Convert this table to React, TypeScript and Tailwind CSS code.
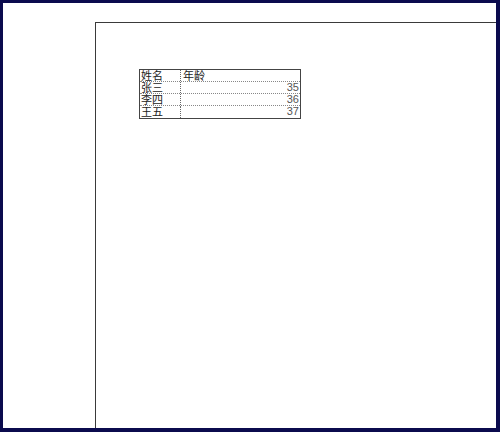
const rows = [
  { name: '张三', age: '35' },
  { name: '李四', age: '36' },
  { name: '王五', age: '37' },
];

export default function App() {
  return (
    <div className="w-[500px] h-[432px] bg-[#0b0b4e] pt-[3px] pl-[3px] pr-[4px] pb-[4px]">
      <div className="h-full bg-white overflow-hidden flex flex-col">
        <div className="ml-[92px] mt-[19px] flex-1 border-l border-t border-[#3a3a3a] bg-white">
          <div className="ml-[43px] mt-[46px] w-[162px] border border-[#444] font-['Noto_Sans_CJK_SC',sans-serif] text-[11px] leading-[11px] text-[#222]">
            <div className="flex h-[12px] border-b border-dotted border-[#888]">
              <div className="w-[41px] pl-[1px] border-r border-dotted border-[#666]">姓名</div>
              <div className="flex-1 pl-[2px]">年龄</div>
            </div>
            {rows.map((r, i) => (
              <div
                key={r.name}
                className={`flex h-[12px] ${i < rows.length - 1 ? 'border-b border-dotted border-[#888]' : ''}`}
              >
                <div className="w-[41px] pl-[1px] border-r border-dotted border-[#666]">{r.name}</div>
                <div className="flex-1 pr-[1px] text-right text-[#555] font-['Liberation_Sans',sans-serif]">
                  {r.age}
                </div>
              </div>
            ))}
          </div>
        </div>
      </div>
    </div>
  );
}
